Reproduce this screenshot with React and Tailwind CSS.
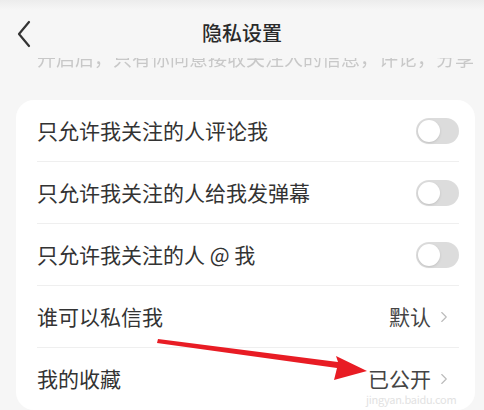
import { ChevronRight } from "lucide-react";

const font = { fontFamily: '"Noto Sans CJK SC", "Noto Sans", sans-serif' };

const rows = [
  { label: "只允许我关注的人评论我", type: "toggle" },
  { label: "只允许我关注的人给我发弹幕", type: "toggle" },
  { label: "只允许我关注的人 @ 我", type: "toggle" },
  { label: "谁可以私信我", type: "value", value: "默认" },
  { label: "我的收藏", type: "value", value: "已公开" },
];

const Toggle = () => (
  <div className="w-[43px] h-[26px] rounded-full bg-[#dcdcdc] flex items-center px-[2px]">
    <div className="w-[22px] h-[22px] rounded-full bg-white shadow-sm" />
  </div>
);

export default function App() {
  return (
    <div
      className="relative w-[484px] h-[410px] overflow-hidden bg-[#f6f6f6]"
      style={font}
    >
      {/* header */}
      <div className="h-[10px] bg-gradient-to-b from-[#ececec] to-[#f6f6f6]" />
      <div className="h-[46px] flex items-center relative">
        <svg
          className="absolute left-[14px] top-[10px]"
          width="20"
          height="28"
          viewBox="0 0 20 28"
        >
          <path
            d="M15 2 L5 14 L15 26"
            fill="none"
            stroke="#333"
            strokeWidth="2.2"
            strokeLinecap="round"
            strokeLinejoin="round"
          />
        </svg>
        <div className="w-full text-center text-[20px] font-medium text-[#2a2a2a]">
          隐私设置
        </div>
      </div>

      {/* faded scrolled-under text */}
      <div className="mt-[2px] h-[13px] overflow-hidden relative">
        <div className="absolute bottom-0 left-[37px] text-[19px] leading-[26px] text-[#c8c8c8] whitespace-nowrap blur-[0.6px]">
          开启后，只有你同意接收关注人的信息，评论，分享
        </div>
      </div>

      {/* card */}
      <div className="mt-[29px] ml-[16px] mr-[9px] bg-white rounded-[18px] pl-[21px] pr-[16px]">
        {rows.map((r, i) => (
          <div
            key={i}
            className={`h-[62px] flex items-center justify-between ${
              i < rows.length - 1 ? "border-b border-[#efefef]" : ""
            }`}
          >
            <span className="text-[21px] text-[#333]">{r.label}</span>
            {r.type === "toggle" ? (
              <Toggle />
            ) : (
              <div className="flex items-center text-[21px] text-[#444] mr-[6px]">
                {r.value}
                <ChevronRight
                  size={18}
                  strokeWidth={1.5}
                  className="text-[#bbb] ml-[4px]"
                />
              </div>
            )}
          </div>
        ))}
      </div>

      {/* watermark */}
      <div className="absolute left-[366px] top-[391px] text-[11px] text-[#e2e2e2] tracking-tight">
        jingyan.baidu.com
      </div>

      {/* red arrow annotation */}
      <svg
        className="absolute left-0 top-0"
        width="484"
        height="410"
        viewBox="0 0 484 410"
      >
        <path
          d="M158 339 L338 362 L336 356 L367 371 L334 380 L337 368 L157 343 Z"
          fill="#e81c24"
        />
      </svg>
    </div>
  );
}
